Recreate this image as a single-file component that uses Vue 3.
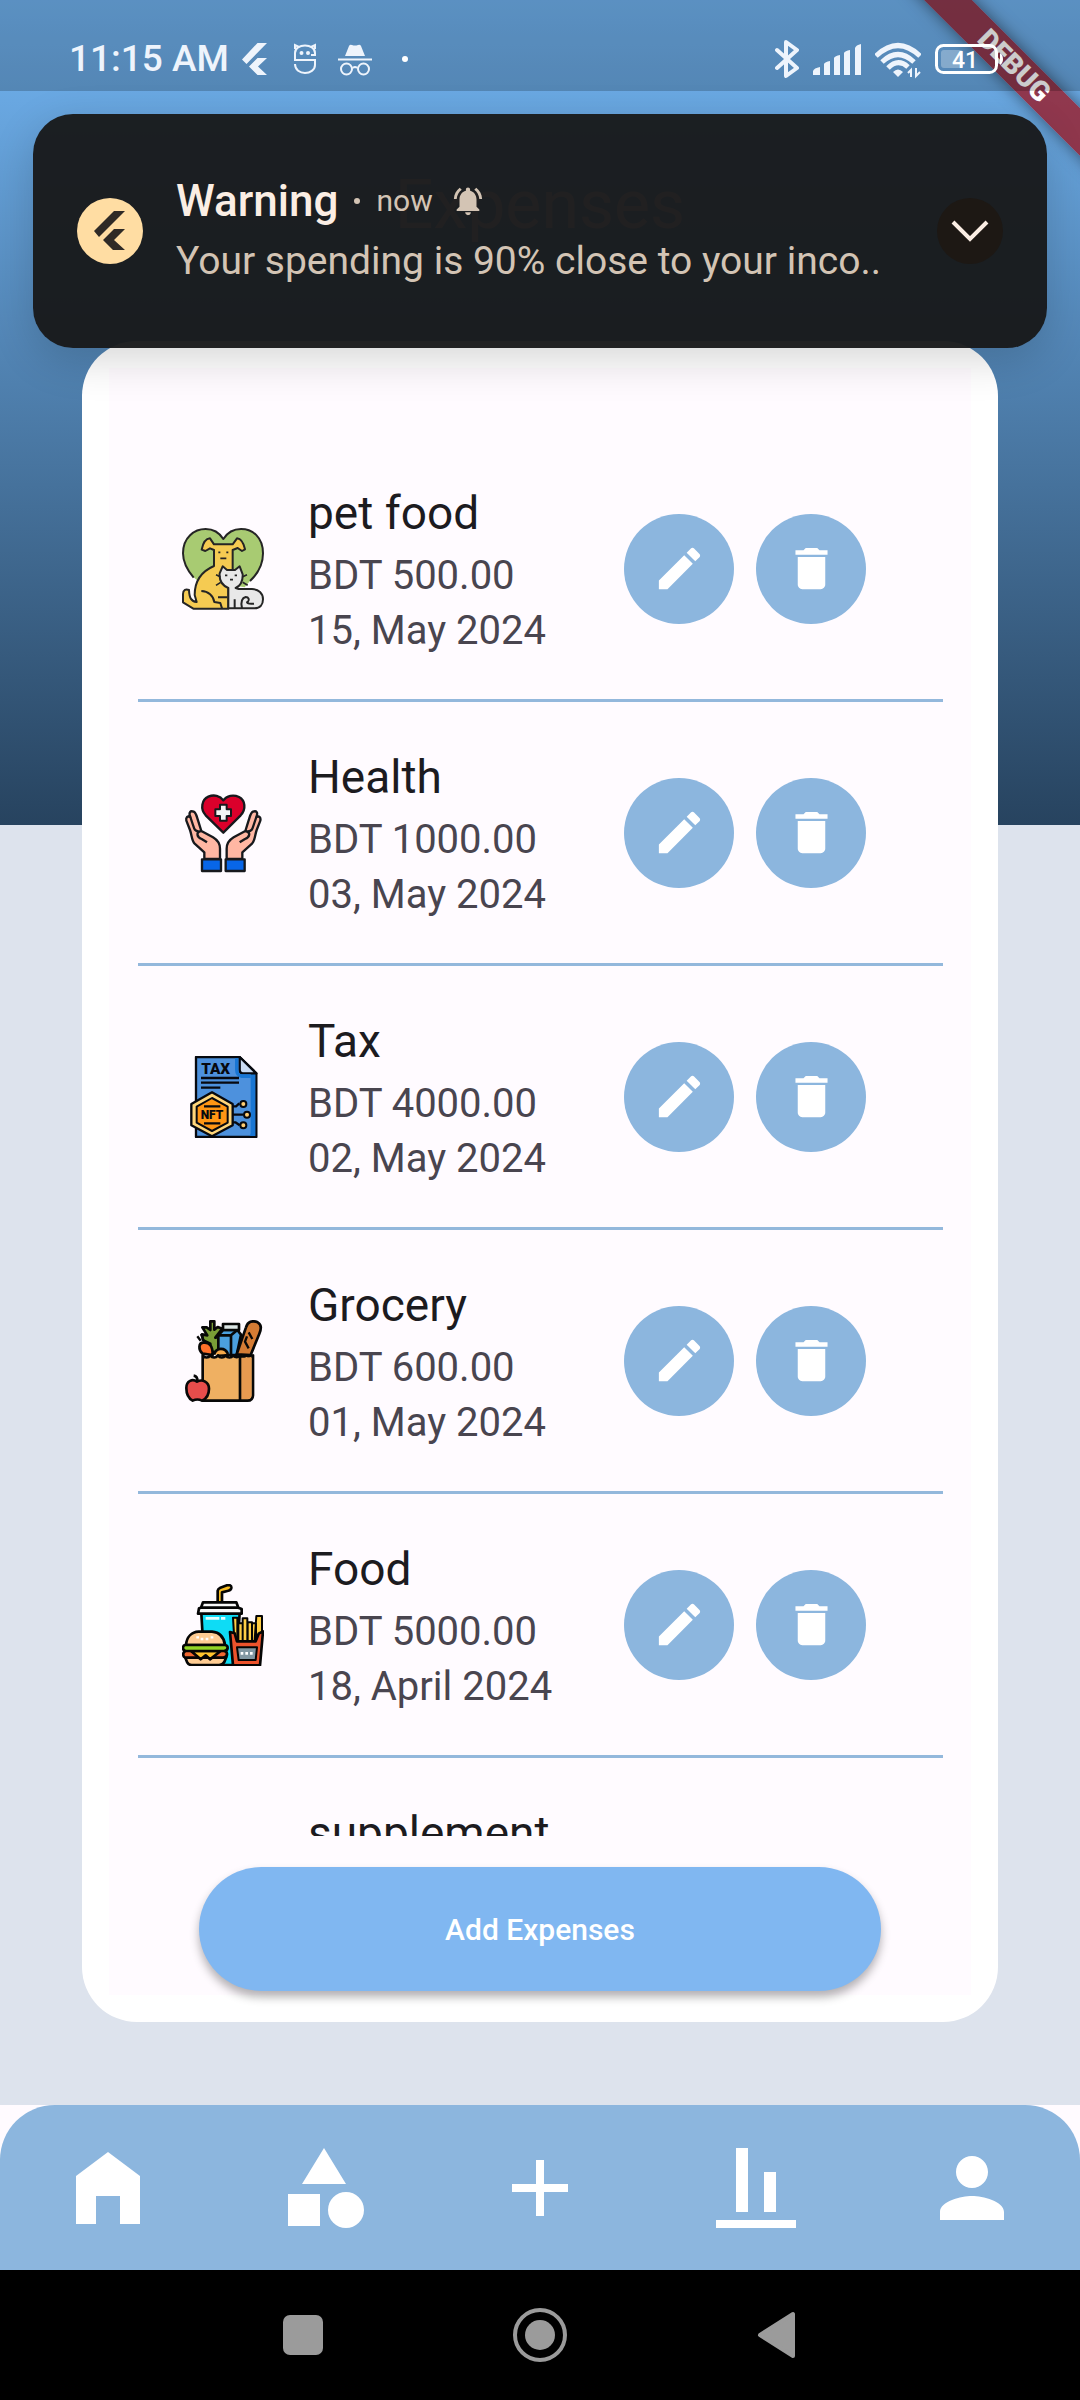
<script setup>
const expenses = [
  { title: 'pet food', amount: 'BDT 500.00', date: '15, May 2024', icon: 'pet', viewBox: '66 84 246 246' },
  { title: 'Health', amount: 'BDT 1000.00', date: '03, May 2024', icon: 'health', viewBox: '66 66 246 246' },
  { title: 'Tax', amount: 'BDT 4000.00', date: '02, May 2024', icon: 'tax', viewBox: '66 78 246 246' },
  { title: 'Grocery', amount: 'BDT 600.00', date: '01, May 2024', icon: 'grocery', viewBox: '66 75 246 246' },
  { title: 'Food', amount: 'BDT 5000.00', date: '18, April 2024', icon: 'food', viewBox: '66 72 246 246' },
  { title: 'supplement', icon: '', viewBox: '0 0 246 246' },
]

const tabs = [
  { label: 'Home', path: 'M12 3L4 9v12h5v-7h6v7h5V9z' },
  { label: 'Categories', path: 'M12 2l-5.500 9h11zM17.500 13a4.500 4.500 0 1 0 0 9a4.500 4.500 0 1 0 0-9zM3 13.500h8v8H3z' },
  { label: 'Add', path: 'M19 13h-6v6h-2v-6H5v-2h6V5h2v6h6z' },
  { label: 'Statistics', path: 'M22 22H2v-2h20zM10 2H7v16h3zM17 8h-3v10h3z' },
  { label: 'Profile', path: 'M12 12c2.210 0 4-1.790 4-4s-1.790-4-4-4-4 1.790-4 4 1.790 4 4 4zm0 2c-2.670 0-8 1.340-8 4v2h16v-2c0-2.660-5.330-4-8-4z' },
]
</script>

<template>
  <div class="app">
    <main class="screen">
      <div class="debug" aria-hidden="true"><span>DEBUG</span></div>

      <header class="status">
        <span class="time">11:15 AM</span>
        <div class="status-left">
          <svg width="28" height="34" viewBox="241 42 28 34" fill="#eef4fc">
            <path d="M256.500 43H266L245.500 64L241 59.500ZM256.500 58H266L257 66.500L266 75H256.500L248 66.500Z" />
          </svg>
          <svg width="28" height="34" viewBox="289 42 28 34" fill="none" stroke="#eef4fc" stroke-width="2">
            <path d="M314 55V53C314 48 309 45.500 304 45.500S294 48 294 53V60H314V65C314 70 309 73 304 73S294 70 294 64" />
            <path d="M310 55H315M294 49V45L298 47M314 49V45L310 47" />
            <circle cx="300.500" cy="53" r="1" /><circle cx="307" cy="53" r="1" />
          </svg>
          <svg width="34" height="34" viewBox="337 42 34 34" fill="none" stroke="#eef4fc" stroke-width="2">
            <path d="M344 56L348 46Q349 44 351 45Q354 46 357 45Q359 44 360 46L364 56Z" fill="#eef4fc" stroke="none" />
            <path d="M337 59.500H371M352 68Q354 66 356 68" />
            <circle cx="345.500" cy="69" r="5.500" /><circle cx="362.500" cy="69" r="5.500" />
          </svg>
          <svg width="26" height="34" viewBox="391 42 26 34"><circle cx="404" cy="59" r="3" fill="#fff" /></svg>
        </div>
        <div class="status-right">
          <svg width="24" height="40" viewBox="775 39 24 40" fill="none" stroke="#eef4fc" stroke-width="4" stroke-linejoin="round" stroke-linecap="round">
            <path d="M777 50L797 68L786 76V42L797 50L777 68" />
          </svg>
          <svg width="48" height="40" viewBox="813 39 48 40" fill="#eef4fc">
            <path d="M813 75V71Q814 68 820 67V75ZM824 75V64Q825 62 830 61V75ZM834 75V58Q835 56 840 55V75ZM844 75V53Q845 51 850 50V75ZM855 75V48Q856 45 861 44V75Z" />
          </svg>
          <svg width="46" height="40" viewBox="874 39 46 40" fill="none" stroke="#eef4fc" stroke-width="5">
            <path d="M875 56Q897 35 919 56M881 62Q897 47 913 62M887 68Q897 58 907 67" />
            <path d="M892 72Q897 67 902 72L897 77Z" fill="#eef4fc" stroke="none" />
            <path d="M910 77V70L907 73M915 68V76L919 72" stroke-width="2" />
          </svg>
          <svg width="68" height="40" viewBox="935 39 68 40" fill="none">
            <rect x="936.500" y="45.500" width="60" height="27" rx="7" stroke="#fff" stroke-width="3" />
            <rect x="941" y="50" width="22" height="18" rx="3" fill="#fff" fill-opacity=".28" />
            <path d="M1000 53Q1003 55 1003 59T1000 65Z" fill="#fff" />
            <text x="965" y="68" text-anchor="middle" class="battery">41</text>
          </svg>
        </div>
      </header>

      <h1 class="heading">Expenses</h1>

      <section class="card">
        <div class="card-body">
          <ul class="list">
            <li v-for="item in expenses" :key="item.title" class="row">
              <svg class="row-icon" :viewBox="item.viewBox" fill="none" stroke="#252525" stroke-width="7" stroke-linejoin="round">
                <g v-if="item.icon === 'pet'" stroke-width="6">
                  <path d="M101 232C78 206 69 184 69 160C69 112 103 87 137 87C162 87 178 98 190 117C202 98 218 87 243 87C278 87 309 112 309 160C309 190 296 219 270 243L254 262L110 240Z" fill="#a8cb72" stroke="none" />
                  <path d="M101 233C78 206 69 184 69 160C69 112 103 87 137 87C162 87 178 98 190 117C202 98 218 87 243 87C278 87 309 112 309 160C309 190 296 219 270 243" />
                  <path d="M162 133L150 115C137 116 129 129 125 149L136 153L150 145L162 150V198C125 214 104 240 104 285L110 306C94 304 88 295 87 270C78 266 69 269 69 282V307L100 326H205V240L218 220V150L233 144L246 153L255 148C251 130 243 116 231 115L218 133Z" fill="#f5cb52" />
                  <path d="M124 273C145 274 160 287 163 306L181 309L186 325M174 292H202" />
                  <path d="M205 325V264C186 256 177 244 179 220L188 199L201 210H225L239 199L248 223C249 246 241 257 227 264L236 267H276C296 268 309 280 309 298C309 314 300 325 284 325Z" fill="#e8e8e8" />
                  <path d="M224 298V325M246 325C241 304 247 293 257 291C266 291 269 300 264 305C257 307 262 313 282 311" />
                  <path d="M175 157H181M199 157H205M181 175H199M195 226H202M224 226H231M210 239H219M168 224L181 230M168 256L182 247M261 224L248 230M263 256L248 247" stroke-width="5" />
                </g>
                <g v-else-if="item.icon === 'health'" stroke="#17191d">
                  <path d="M190 188L137 136C120 117 125 89 145 80C162 73 180 77 190 91C200 77 220 73 237 81C256 91 259 117 242 136Z" fill="#db002b" />
                  <path d="M180 104H200V118H213V138H200V152H180V138H166V118H180Z" fill="#f4f4f4" stroke-width="6" />
                  <g id="hand">
                    <path d="M133 267V247L104 221C95 212 96 197 90 180L79 152C77 142 82 137 91 141C85 127 91 121 101 125C109 128 110 141 115 154L124 183L159 202C174 211 180 220 180 236V267Z" fill="#ffb7a3" />
                    <path d="M91 141L99 165C103 178 105 184 116 184M124 183C106 186 111 202 125 207L141 217" />
                    <rect x="126" y="268" width="57" height="35" fill="#0866e8" />
                  </g>
                  <use href="#hand" transform="translate(380 0) scale(-1 1)" />
                </g>
                <g v-else-if="item.icon === 'tax'" stroke="#07090f">
                  <path d="M108 81H239L289 130V321H108Z" fill="#4d91dd" />
                  <path d="M272 130H286V318H266Q273 315 272 305Z" fill="#1976d3" stroke="none" />
                  <path d="M239 81L289 130H248Q239 130 239 120Z" fill="#cbdcf4" />
                  <path d="M225 84V118Q225 141 245 144H272V133H246Q235 133 235 118V84Z" fill="#1976d3" stroke="none" />
                  <path d="M123 144H237M123 158H237M123 173H181M214 229H228L238 220M217 254H250M215 277H226L239 286" />
                  <g fill="#ffcc72" stroke-width="6">
                    <circle cx="250" cy="222" r="9" /><circle cx="261" cy="254" r="9" /><circle cx="250" cy="286" r="9" />
                  </g>
                  <path d="M156 187L218 222V286L156 319L94 286V222Z" fill="#ffd67a" />
                  <path d="M156 204L203 230V278L156 303L110 278V230Z" fill="#ff9614" stroke-width="6" />
                  <path d="M132 229H181M132 280H181" />
                  <text x="167" y="132" text-anchor="middle" class="tax-label">TAX</text>
                  <text x="156" y="268" text-anchor="middle" class="nft-label">NFT</text>
                </g>
                <g v-else-if="item.icon === 'grocery'" stroke="#080808" stroke-width="8">
                  <path d="M147 169L151 146L129 136L126 118L142 121L127 97H140L151 105V79H163V104L173 96L187 101L166 128L176 126V173Z" fill="#799d36" />
                  <path d="M175 180V121L189 105H232L243 119L230 180Z" fill="#4ba0df" />
                  <path d="M175 121H213V180M213 121L232 105" /><path d="M189 87H237V105H189Z" fill="#dce6e5" />
                  <path d="M230 178L258 97C263 80 277 75 293 82C306 89 304 102 298 116L272 180Z" fill="#d57c34" />
                  <path d="M266 112L277 132M261 124L255 140L266 160M112 124L122 137M123 117L131 137" stroke-width="7" />
                  <path d="M128 176C114 164 115 142 131 143C149 141 158 154 158 180Z" fill="#ff7029" />
                  <path d="M162 179C169 156 195 156 204 177" fill="#f5a94a" />
                  <path d="M128 181C135 190 145 189 151 181C158 190 167 189 174 181C181 190 190 189 197 181C204 190 213 189 220 181C227 189 235 187 240 181C246 188 253 187 259 181C266 188 273 185 279 181V301Q278 317 263 317H128Z" fill="#efb062" />
                  <path d="M244 188C255 189 267 188 274 185V299Q275 310 263 312H244Z" fill="#e79a50" stroke="none" />
                  <path d="M240 184V316" />
                  <path d="M98 317C87 311 79 297 79 279C79 256 98 251 111 260C128 251 147 261 147 281C147 300 137 312 126 317Q112 310 98 317Z" fill="#e74d4b" />
                  <path d="M112 260C113 248 109 243 101 242" />
                </g>
                <g v-else-if="item.icon === 'food'" stroke="#050505" stroke-width="8">
                  <path d="M173 129V92Q174 86 181 83L201 76C208 74 215 76 214 84C213 90 209 92 202 93L186 97V129Z" fill="#f9bd22" />
                  <path d="M124 160L133 315H228L239 160Z" fill="#0edcf5" />
                  <path d="M137 175H178M183 175H196" stroke="#e4ffff" />
                  <path d="M123 143L129 127H229L235 143L245 147V161H114L117 145Z" fill="#f8f8f8" /><path d="M121 143H237" />
                  <path d="M78 255C80 230 95 216 116 215H156C179 217 192 233 195 255Z" fill="#ffcc93" />
                  <path d="M75 291L82 308Q86 315 95 315H177Q188 315 193 306L199 291Z" fill="#ffcc93" />
                  <path d="M77 272Q68 276 70 286Q71 293 80 293H190Q202 291 201 281Q200 274 192 272Z" fill="#f06731" />
                  <path d="M93 273H182L150 298L137 286L122 298Z" fill="#ffc42e" />
                  <path d="M75 255H195Q203 256 203 264Q202 272 192 273H77Q68 271 69 263Q69 257 75 255Z" fill="#93d426" />
                  <path d="M109 232H117M122 237H130M137 237H145M152 232H160" stroke="#fff" stroke-width="7" />
                  <g fill="#ffce45" stroke-width="6">
                    <path d="M219 173H232V240H223ZM235 190H248V245H235ZM248 175H262V245H248ZM263 187H276V245H263ZM276 190H288V245H276ZM289 168H306V240H284Z" />
                  </g>
                  <path d="M210 216L224 220L231 244H287L296 221L309 214L300 316H219Z" fill="#ed532c" />
                  <path d="M231 262H291L287 300H236Z" fill="#8297a2" stroke-width="6" />
                  <path d="M242 280H250M256 280H264M270 280H278" stroke="#fff" />
                </g>
              </svg>
              <div class="row-text">
                <h2>{{ item.title }}</h2>
                <p>{{ item.amount }}</p>
                <p>{{ item.date }}</p>
              </div>
              <div v-if="item.icon" class="actions">
                <button type="button" class="round" :aria-label="'Edit ' + item.title">
                  <svg viewBox="0 0 24 24"><path d="M3 17.250V21h3.750L17.810 9.940l-3.750-3.750L3 17.250zM20.710 7.040c.39-.39.39-1.020 0-1.410l-2.340-2.340c-.39-.39-1.020-.39-1.410 0l-1.830 1.830 3.750 3.750 1.830-1.830z" /></svg>
                </button>
                <button type="button" class="round" :aria-label="'Delete ' + item.title">
                  <svg viewBox="0 0 24 24"><path d="M6 19c0 1.100.9 2 2 2h8c1.100 0 2-.9 2-2V7H6v12zM19 4h-3.500l-1-1h-5l-1 1H5v2h14V4z" /></svg>
                </button>
              </div>
            </li>
          </ul>
          <button type="button" class="add">Add Expenses</button>
        </div>
      </section>

      <aside class="toast" role="alert">
        <svg class="toast-logo" width="66" height="68" viewBox="77 197 66 68">
          <ellipse cx="110" cy="231" rx="33" ry="33" fill="#ffdda3" />
          <path d="M114 211H125L99 237L94 231ZM114 229H125L114 240L125 250H113L103 240Z" fill="#2f2a26" />
        </svg>
        <div class="toast-text">
          <div class="toast-head">
            <strong>Warning</strong>
            <span class="dot"></span>
            <span class="when">now</span>
            <svg width="34" height="34" viewBox="0 0 24 24" fill="#d3c4b4"><path d="M7.580 4.080L6.150 2.650C3.750 4.480 2.170 7.300 2.030 10.500h2c.15-2.650 1.510-4.970 3.550-6.420zm12.390 6.420h2c-.15-3.200-1.730-6.020-4.120-7.850l-1.420 1.430c2.020 1.450 3.390 3.770 3.540 6.420zM18 11c0-3.070-1.640-5.640-4.500-6.320V4c0-.83-.67-1.500-1.500-1.500s-1.500.67-1.500 1.500v.68C7.630 5.360 6 7.920 6 11v5l-2 2v1h16v-1l-2-2v-5zm-6 11c.14 0 .27-.01.4-.04.65-.14 1.180-.58 1.440-1.180.1-.24.15-.5.15-.78h-4c.01 1.100.9 2 2.010 2z" /></svg>
          </div>
          <p>Your spending is 90% close to your inco..</p>
        </div>
        <button type="button" class="expand" aria-label="Expand">
          <svg width="38" height="24" viewBox="0 0 38 24" fill="none" stroke="#fbeee4" stroke-width="4"><path d="M2 3L19 20L36 3" /></svg>
        </button>
      </aside>
    </main>

    <nav class="tabs">
      <button v-for="tab in tabs" :key="tab.label" type="button" :aria-label="tab.label">
        <svg width="96" height="96" viewBox="0 0 24 24" fill="#fff"><path :d="tab.path" /></svg>
      </button>
    </nav>

    <footer class="system">
      <button type="button" aria-label="Recent apps">
        <svg width="60" height="60" viewBox="0 0 60 60" fill="#9b9b9b"><rect x="10" y="10" width="40" height="40" rx="7" /></svg>
      </button>
      <button type="button" aria-label="Home screen">
        <svg width="60" height="60" viewBox="0 0 60 60" fill="#9b9b9b"><circle cx="30" cy="30" r="15" /><circle cx="30" cy="30" r="25" fill="none" stroke="#9b9b9b" stroke-width="4" /></svg>
      </button>
      <button type="button" aria-label="Back">
        <svg width="60" height="60" viewBox="0 0 60 60" fill="#9b9b9b" stroke="#9b9b9b" stroke-width="4" stroke-linejoin="round"><path d="M46 9V51L13 30Z" /></svg>
      </button>
    </footer>
  </div>
</template>

<style>
body {
  background: #000;
}
</style>

<style scoped>
* {
  box-sizing: border-box;
}

.app {
  display: flex;
  flex-direction: column;
  height: 100vh;
  font-family: Roboto, sans-serif;
  background: #fffbff;
}

button {
  display: flex;
  align-items: center;
  justify-content: center;
  padding: 0;
  border: 0;
  background: none;
  font-family: inherit;
}

h1,
h2,
p,
ul {
  margin: 0;
  padding: 0;
}

svg {
  display: block;
  flex: none;
}

.screen {
  position: relative;
  display: flex;
  flex: 1;
  flex-direction: column;
  min-height: 0;
  padding-bottom: 83px;
  overflow: hidden;
  background: #dde3ed linear-gradient(#72b5f3, #27435f) no-repeat top / 100% 825px;
}

/* Diagonal ribbon across the top right corner */
.debug {
  position: absolute;
  top: 49px;
  right: -74px;
  width: 280px;
  height: 34px;
  transform: rotate(45deg);
  background: rgba(155, 24, 36, 0.78);
  box-shadow: 0 0 16px rgba(0, 0, 0, 0.5);
  color: #fff;
  font-size: 28px;
  font-weight: 900;
  line-height: 34px;
  text-align: center;
}

.status {
  position: relative;
  display: flex;
  flex: none;
  align-items: center;
  height: 91px;
  padding: 27px 77px 0 69px;
  background: rgba(0, 0, 0, 0.2);
}

.time {
  color: #eef4fc;
  font-size: 37px;
  font-weight: 500;
  line-height: 44px;
}

.status-left {
  display: flex;
  gap: 20px;
  margin-left: 13px;
}

.status-right {
  display: flex;
  gap: 14px;
  margin-left: auto;
}

.battery {
  fill: #fff;
  font-size: 23px;
  font-weight: 500;
}

.heading {
  flex: none;
  padding: 74px 0 96px;
  color: #ffc8be;
  font-size: 68px;
  font-weight: 400;
  line-height: 80px;
  text-align: center;
}

.card {
  display: flex;
  flex: 1;
  min-height: 0;
  margin: 0 82px;
  padding: 27px;
  border-radius: 55px;
  background: #fff;
}

.card-body {
  display: flex;
  flex: 1;
  flex-direction: column;
  min-width: 0;
  padding: 70px 0 4px;
  background: #fffbff;
}

.list {
  flex: 1 1 0;
  min-height: 0;
  margin: 0 28px 0 29px;
  overflow: hidden;
  list-style: none;
}

.row {
  display: flex;
  align-items: center;
  height: 264px;
  padding: 0 77px 0 44px;
  border-bottom: 3px solid #93b8dc;
}

.row-icon {
  width: 82px;
  height: 82px;
  margin-right: 44px;
}

.row-text {
  flex: 1;
  min-width: 0;
  color: #49454f;
  font-size: 40px;
  line-height: 55px;
}

.row-text h2 {
  margin-bottom: 2px;
  color: #1c1b1f;
  font-size: 46px;
  font-weight: 400;
  line-height: 66px;
}

.row-text p {
  min-height: 55px;
}

.actions {
  display: flex;
  gap: 22px;
}

.round {
  width: 110px;
  height: 110px;
  border-radius: 50%;
  background: #8cb6de;
}

.round svg {
  width: 55px;
  height: 55px;
  fill: #fff;
}

.tax-label,
.nft-label {
  fill: #07090f;
  stroke: none;
  font-weight: 900;
}

.tax-label {
  font-size: 46px;
}

.nft-label {
  font-size: 36px;
}

.add {
  flex: none;
  height: 124px;
  margin: 31px 90px 0;
  border-radius: 62px;
  background: #80b7f1;
  box-shadow: 0 6px 10px rgba(0, 0, 0, 0.3);
  color: #fff;
  font-size: 30px;
  font-weight: 500;
}

/* Heads-up notification floating over the page */
.toast {
  position: absolute;
  top: 114px;
  left: 33px;
  right: 33px;
  display: flex;
  align-items: center;
  height: 234px;
  padding: 0 44px;
  border-radius: 40px;
  background: rgba(24, 25, 26, 0.96);
  box-shadow: 0 12px 44px rgba(0, 0, 0, 0.16);
}

.toast-text {
  flex: 1;
  min-width: 0;
  margin-left: 33px;
  color: #d3c4b4;
  font-size: 39px;
  line-height: 60px;
  white-space: nowrap;
}

.toast-head {
  display: flex;
  align-items: center;
}

.toast-head strong {
  color: #fbeee4;
  font-size: 44px;
  font-weight: 500;
}

.dot {
  width: 6px;
  height: 6px;
  margin: 0 16px;
  border-radius: 50%;
  background: #d3c4b4;
}

.when {
  margin-right: 18px;
  font-size: 30px;
}

.expand {
  width: 66px;
  height: 66px;
  border-radius: 50%;
  background: #1d1814;
}

.tabs {
  display: flex;
  flex: none;
  height: 165px;
  border-radius: 55px 55px 0 0;
  background: #8cb6de;
}

.tabs button {
  flex: 1;
}

.system {
  display: flex;
  flex: none;
  justify-content: center;
  gap: 177px;
  height: 130px;
  background: #000;
}
</style>
